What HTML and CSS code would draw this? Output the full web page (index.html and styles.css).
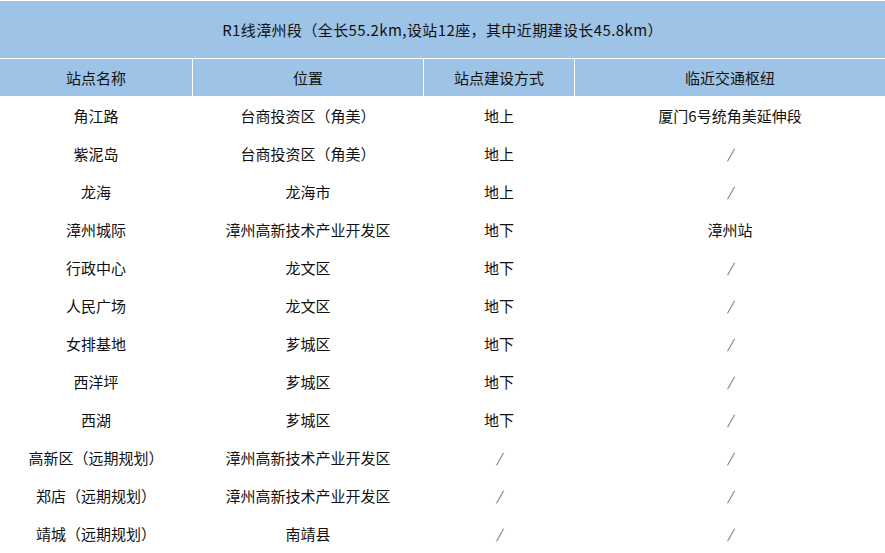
FILE: index.html
```html
<!DOCTYPE html>
<html lang="zh-CN">
<head>
<meta charset="utf-8">
<link rel="stylesheet" href="styles.css">
</head>
<body>
<div class="sheet">
  <div class="title">R1线漳州段（全长55.2km,设站12座，其中近期建设长45.8km）</div>
  <div class="row head">
    <div>站点名称</div><div>位置</div><div>站点建设方式</div><div>临近交通枢纽</div>
  </div>
  <div class="row"><div>角江路</div><div>台商投资区（角美）</div><div>地上</div><div>厦门6号统角美延伸段</div></div>
  <div class="row"><div>紫泥岛</div><div>台商投资区（角美）</div><div>地上</div><div class="na">/</div></div>
  <div class="row"><div>龙海</div><div>龙海市</div><div>地上</div><div class="na">/</div></div>
  <div class="row"><div>漳州城际</div><div>漳州高新技术产业开发区</div><div>地下</div><div>漳州站</div></div>
  <div class="row"><div>行政中心</div><div>龙文区</div><div>地下</div><div class="na">/</div></div>
  <div class="row"><div>人民广场</div><div>龙文区</div><div>地下</div><div class="na">/</div></div>
  <div class="row"><div>女排基地</div><div>芗城区</div><div>地下</div><div class="na">/</div></div>
  <div class="row"><div>西洋坪</div><div>芗城区</div><div>地下</div><div class="na">/</div></div>
  <div class="row"><div>西湖</div><div>芗城区</div><div>地下</div><div class="na">/</div></div>
  <div class="row"><div>高新区（远期规划）</div><div>漳州高新技术产业开发区</div><div class="na">/</div><div class="na">/</div></div>
  <div class="row"><div>郑店（远期规划）</div><div>漳州高新技术产业开发区</div><div class="na">/</div><div class="na">/</div></div>
  <div class="row"><div>靖城（远期规划）</div><div>南靖县</div><div class="na">/</div><div class="na">/</div></div>
</div>
</body>
</html>
```

FILE: styles.css
```css
html, body {
  margin: 0;
  padding: 0;
  background: #ffffff;
}
body {
  font-family: "Noto Sans CJK SC", "Noto Sans", sans-serif;
  font-size: 15px;
  color: #111111;
}
.sheet {
  width: 885px;
}
.title {
  height: 57px;
  border-top: 1px solid #ffffff;
  border-bottom: 1px solid #ffffff;
  background: #9dc3e6;
  display: flex;
  align-items: center;
  justify-content: center;
  font-size: 15px;
  letter-spacing: 0.4px;
}
.row {
  display: grid;
  grid-template-columns: 192px 230px 150px 1fr;
  column-gap: 1px;
  height: 38px;
  align-items: center;
}
.row > div {
  text-align: center;
  white-space: nowrap;
}
.head {
  height: 37px;
  background: #ffffff;
}
.head > div {
  background: #9dc3e6;
  height: 37px;
  line-height: 37px;
}
.na {
  color: #555555;
  font-style: italic;
  font-size: 13px;
}
```
